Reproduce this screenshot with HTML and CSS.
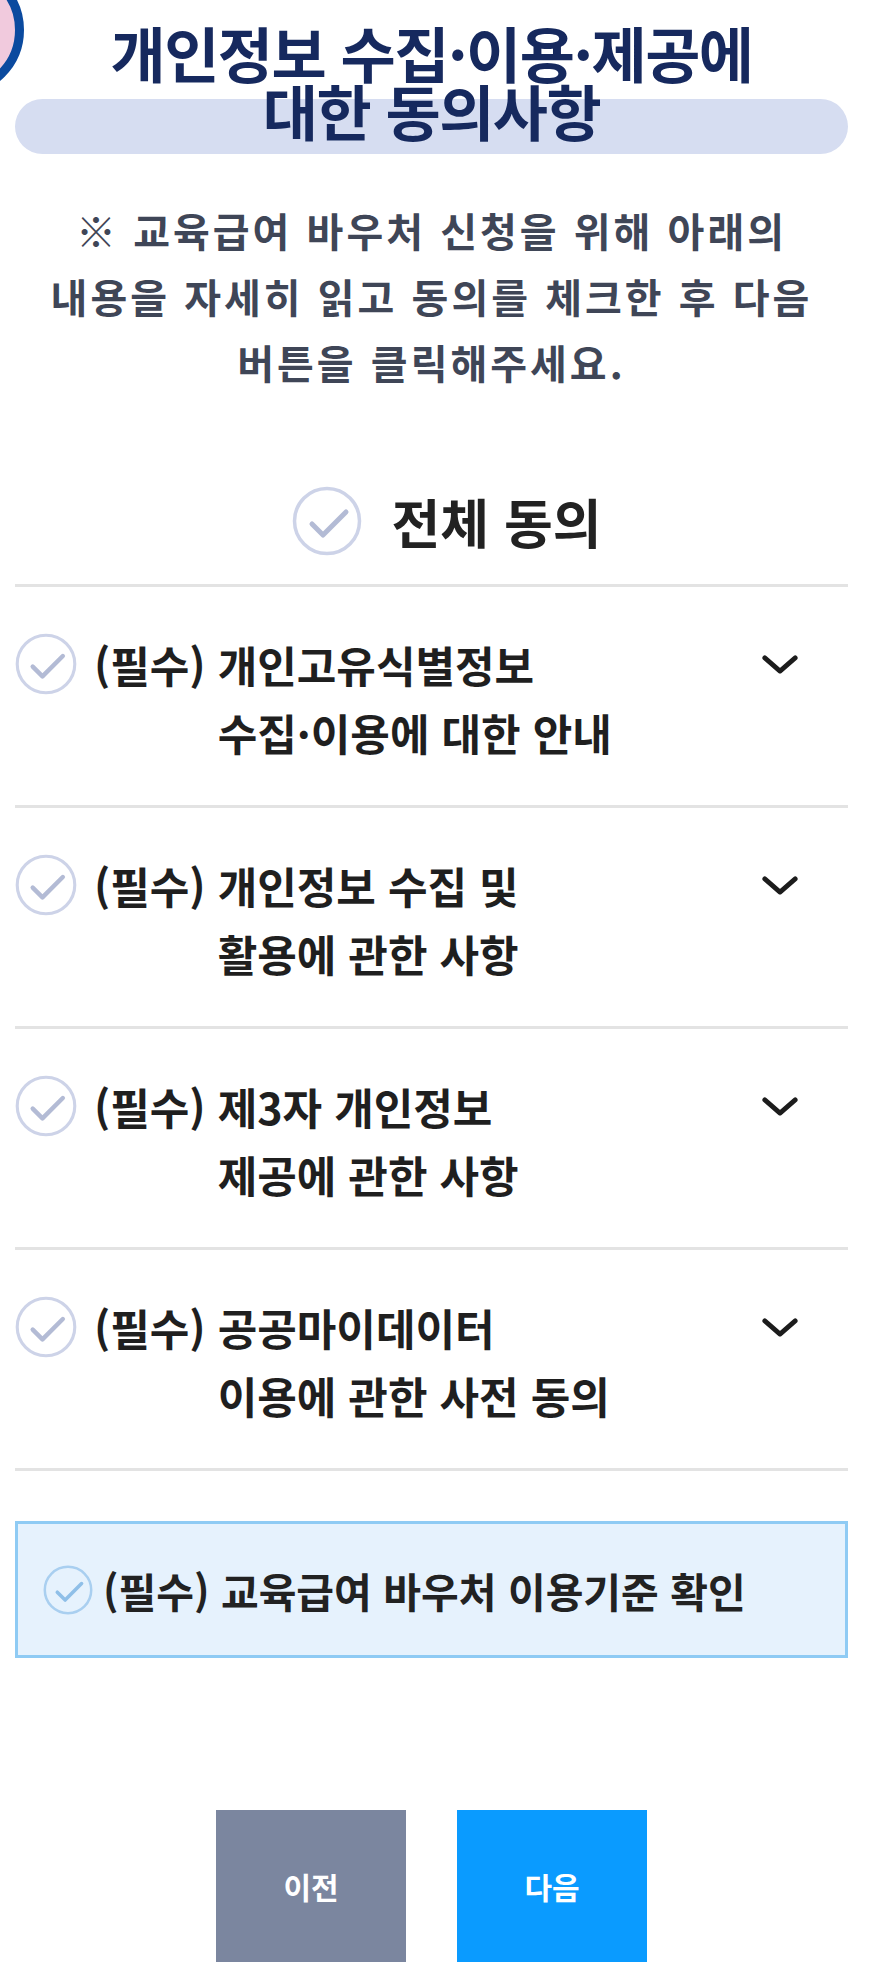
FILE: index.html
```html
<!DOCTYPE html>
<html lang="ko">
<head>
<meta charset="utf-8">
<title>개인정보 수집·이용·제공에 대한 동의사항</title>
<link rel="stylesheet" href="styles.css">
</head>
<body>
<div class="badge"></div>
<main class="page">
  <header class="hero">
    <div class="pill"></div>
    <h1 class="title"><span class="title-line">개인정보 수집·이용·제공에</span><span class="title-line">대한 동의사항</span></h1>
  </header>

  <p class="notice">※ 교육급여 바우처 신청을 위해 아래의<br>내용을 자세히 읽고 동의를 체크한 후 다음<br>버튼을 클릭해주세요.</p>

  <div class="agree-all">
    <svg class="check check-lg" viewBox="0 0 70 70"><circle cx="35" cy="35" r="32.5" fill="none" stroke="#cdd3e8" stroke-width="3.5"/><polyline points="20,38 31,49 54,26" fill="none" stroke="#b3bbd5" stroke-width="5" stroke-linecap="round" stroke-linejoin="round"/></svg>
    <span class="agree-all-text">전체 동의</span>
  </div>

  <ul class="list">
    <li class="item">
      <svg class="check check-md" viewBox="0 0 70 70"><circle cx="35" cy="35" r="32.5" fill="none" stroke="#cdd3e8" stroke-width="3.5"/><polyline points="20,38 31,49 54,26" fill="none" stroke="#b3bbd5" stroke-width="5" stroke-linecap="round" stroke-linejoin="round"/></svg>
      <span class="req">(필수)</span>
      <span class="item-text">개인고유식별정보<br>수집·이용에 대한 안내</span>
      <svg class="chev" viewBox="0 0 40 22"><polyline points="4,4 20,18 36,4" fill="none" stroke="#1c1c1c" stroke-width="5" stroke-linecap="round" stroke-linejoin="round"/></svg>
    </li>
    <li class="item">
      <svg class="check check-md" viewBox="0 0 70 70"><circle cx="35" cy="35" r="32.5" fill="none" stroke="#cdd3e8" stroke-width="3.5"/><polyline points="20,38 31,49 54,26" fill="none" stroke="#b3bbd5" stroke-width="5" stroke-linecap="round" stroke-linejoin="round"/></svg>
      <span class="req">(필수)</span>
      <span class="item-text">개인정보 수집 및<br>활용에 관한 사항</span>
      <svg class="chev" viewBox="0 0 40 22"><polyline points="4,4 20,18 36,4" fill="none" stroke="#1c1c1c" stroke-width="5" stroke-linecap="round" stroke-linejoin="round"/></svg>
    </li>
    <li class="item">
      <svg class="check check-md" viewBox="0 0 70 70"><circle cx="35" cy="35" r="32.5" fill="none" stroke="#cdd3e8" stroke-width="3.5"/><polyline points="20,38 31,49 54,26" fill="none" stroke="#b3bbd5" stroke-width="5" stroke-linecap="round" stroke-linejoin="round"/></svg>
      <span class="req">(필수)</span>
      <span class="item-text">제3자 개인정보<br>제공에 관한 사항</span>
      <svg class="chev" viewBox="0 0 40 22"><polyline points="4,4 20,18 36,4" fill="none" stroke="#1c1c1c" stroke-width="5" stroke-linecap="round" stroke-linejoin="round"/></svg>
    </li>
    <li class="item">
      <svg class="check check-md" viewBox="0 0 70 70"><circle cx="35" cy="35" r="32.5" fill="none" stroke="#cdd3e8" stroke-width="3.5"/><polyline points="20,38 31,49 54,26" fill="none" stroke="#b3bbd5" stroke-width="5" stroke-linecap="round" stroke-linejoin="round"/></svg>
      <span class="req">(필수)</span>
      <span class="item-text">공공마이데이터<br>이용에 관한 사전 동의</span>
      <svg class="chev" viewBox="0 0 40 22"><polyline points="4,4 20,18 36,4" fill="none" stroke="#1c1c1c" stroke-width="5" stroke-linecap="round" stroke-linejoin="round"/></svg>
    </li>
  </ul>

  <div class="confirm">
    <svg class="check check-sm" viewBox="0 0 70 70"><circle cx="35" cy="35" r="32.5" fill="none" stroke="#a9cff0" stroke-width="3.5"/><polyline points="20,38 31,49 54,26" fill="none" stroke="#8fbfe8" stroke-width="5" stroke-linecap="round" stroke-linejoin="round"/></svg>
    <span class="confirm-text">(필수) 교육급여 바우처 이용기준 확인</span>
  </div>

  <div class="buttons">
    <button class="btn btn-prev" type="button">이전</button>
    <button class="btn btn-next" type="button">다음</button>
  </div>
</main>
</body>
</html>
```

FILE: styles.css
```css
* { box-sizing: border-box; }

html, body {
  margin: 0;
  padding: 0;
  background: #ffffff;
}

body {
  font-family: "Noto Sans CJK KR", "Noto Sans", sans-serif;
  position: relative;
  overflow: hidden;
  min-height: 1984px;
}

.badge {
  position: absolute;
  left: -108px;
  top: -36px;
  width: 132px;
  height: 132px;
  border-radius: 50%;
  border: 9px solid #0b4a9f;
  background: #f1cadd;
}

.page {
  margin-left: 15px;
  width: 833px;
}

.hero {
  display: grid;
}

.hero > * {
  grid-area: 1 / 1;
}

.pill {
  margin-top: 99px;
  height: 55px;
  border-radius: 28px;
  background: #d6ddf1;
}

.title {
  margin: 23px 0 0;
  display: flex;
  flex-direction: column;
  align-items: center;
  font-size: 60px;
  font-weight: 700;
  letter-spacing: -1.5px;
  color: #16295e;
  text-align: center;
}

.title-line {
  display: block;
  height: 58px;
  line-height: 58px;
}

.notice {
  margin: 43px 0 0;
  font-size: 40px;
  line-height: 66px;
  font-weight: 700;
  letter-spacing: 3px;
  color: #3f4657;
  text-align: center;
}

.agree-all {
  margin-top: 91px;
  display: flex;
  justify-content: center;
  align-items: center;
  gap: 30px;
  padding-left: 30px;
}

.check { display: block; flex: none; }
.check-lg { width: 70px; height: 70px; }
.check-md { width: 62px; height: 62px; margin-top: 3px; }
.check-sm { width: 50px; height: 50px; }

.agree-all-text {
  font-size: 53px;
  line-height: 70px;
  font-weight: 700;
  color: #222222;
}

.list {
  list-style: none;
  margin: 28px 0 0;
  padding: 0;
  border-bottom: 3px solid #e3e3e3;
}

.item {
  display: flex;
  align-items: flex-start;
  padding: 43px 0 39px;
  border-top: 3px solid #e3e3e3;
  font-size: 43px;
  line-height: 68px;
  font-weight: 700;
  color: #1f1f1f;
}

.req {
  margin-left: 17px;
}

.item-text {
  margin-left: 12px;
}

.chev {
  width: 38px;
  height: 21px;
  margin: 24px 49px 0 auto;
  flex: none;
}

.confirm {
  margin-top: 50px;
  height: 137px;
  display: flex;
  align-items: center;
  gap: 10px;
  padding-left: 25px;
  border: 3px solid #8fcbf4;
  background: #e6f2fd;
}

.confirm-text {
  font-size: 41px;
  font-weight: 700;
  color: #222222;
}

.buttons {
  margin-top: 152px;
  display: flex;
  justify-content: center;
  gap: 51px;
}

.btn {
  width: 190px;
  height: 152px;
  border: none;
  border-radius: 0;
  font-family: "Noto Sans CJK KR", "Noto Sans", sans-serif;
  font-size: 30px;
  font-weight: 700;
  color: #ffffff;
  padding: 0;
}

.btn-prev { background: #7b869f; }
.btn-next { background: #0a9bff; }
```
